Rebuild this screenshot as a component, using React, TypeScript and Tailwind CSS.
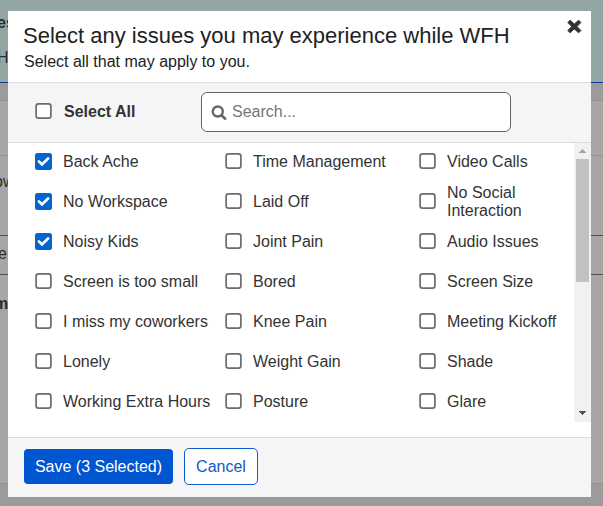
import { useState } from "react";

const columns = [
  ["Back Ache", "No Workspace", "Noisy Kids", "Screen is too small", "I miss my coworkers", "Lonely", "Working Extra Hours"],
  ["Time Management", "Laid Off", "Joint Pain", "Bored", "Knee Pain", "Weight Gain", "Posture"],
  ["Video Calls", "No Social Interaction", "Audio Issues", "Screen Size", "Meeting Kickoff", "Shade", "Glare"],
];
const rows = columns[0].map((_, i) => columns.map((c) => c[i]));

function Box({ checked }: { checked: boolean }) {
  return (
    <svg width="17" height="17" viewBox="0 0 17 17" className="shrink-0">
      {checked ? (
        <>
          <rect width="17" height="17" rx="2.5" fill="#0065cf" />
          <path d="M3.9 8.4 L7 11.4 L13.1 5.5" fill="none" stroke="#fff" strokeWidth="2.7" strokeLinecap="round" />
        </>
      ) : (
        <rect x="1.1" y="0.9" width="14.8" height="14.3" rx="2.4" fill="#fff" stroke="#6b6b6b" strokeWidth="1.7" />
      )}
    </svg>
  );
}

function Option({ label, checked, onToggle }: { label: string; checked: boolean; onToggle: () => void }) {
  return (
    <button type="button" role="checkbox" aria-checked={checked} onClick={onToggle} className="flex h-10 items-center gap-[11px] text-left leading-[18px]">
      <Box checked={checked} />
      <span className="pt-px">{label}</span>
    </button>
  );
}

function Backdrop() {
  return (
    <div className="flex h-full flex-col overflow-hidden bg-[#a6a6a6] text-[#2b2b2b]">
      <div className="h-[83px] shrink-0 border-b border-[#0a3d91] bg-[#93a6a3]">
        <div className="ml-[-3px] pt-[13px] leading-5 font-bold">es</div>
        <div className="ml-[-3px] pt-[15px] leading-5">H</div>
      </div>
      <div className="h-[18px] shrink-0 border-b border-[#929292] bg-[#9b9b9b]" />
      <div className="h-[55px] shrink-0 border-b border-[#929292]" />
      <div className="h-[79px] shrink-0 pt-[16px]">
        <div className="ml-[-6px] leading-5">ow</div>
      </div>
      <div className="h-10 shrink-0 border-y border-[#505050] pt-[8px] leading-5">
        <div className="ml-[-2px]">e</div>
      </div>
      <div className="h-[209px] shrink-0 border-b border-[#929292] pt-[19px]">
        <div className="ml-[-6px] leading-5 font-bold">m</div>
      </div>
      <div className="grow bg-[#9b9b9b]" />
    </div>
  );
}

export default function App() {
  const [selected, setSelected] = useState<string[]>(["Back Ache", "No Workspace", "Noisy Kids"]);
  const all = columns.flat();
  const toggle = (item: string) =>
    setSelected((s) => (s.includes(item) ? s.filter((x) => x !== item) : [...s, item]));

  return (
    <div className="relative h-[506px] w-[603px] overflow-hidden font-['Liberation_Sans',Arial,sans-serif] text-[16px] text-[#333]">
      <Backdrop />
      <div role="dialog" className="absolute top-[11px] left-2 flex h-[486px] w-[583px] flex-col bg-white">
        <header className="flex h-[72px] shrink-0 justify-between border-b border-[#dcdcdc] pl-[15px]">
          <div className="pt-[11px] text-[#222]">
            <h1 className="text-[22px] leading-[27px] whitespace-nowrap">Select any issues you may experience while WFH</h1>
            <p className="pt-[3px] pl-px leading-5">Select all that may apply to you.</p>
          </div>
          <button type="button" aria-label="Close" className="mt-[8px] mr-[9px] h-[15px] w-[15px]">
            <svg width="15" height="15" viewBox="0 0 15 15">
              <path
                d="M3 1.2 L7.3 5.1 L11.6 1.2 L13.9 3.5 L10 7.5 L13.9 11.5 L11.6 13.8 L7.3 9.9 L3 13.8 L0.9 11.5 L4.7 7.5 L0.9 3.5 Z"
                fill="#333"
                stroke="#333"
                strokeWidth="1"
                strokeLinejoin="round"
              />
            </svg>
          </button>
        </header>

        <div className="flex h-[60px] shrink-0 items-start border-b border-[#dcdcdc] bg-[#f5f5f5] pt-[9px] pl-[27px]">
          <div className="-mt-px w-[166px] font-bold [&_button]:gap-3">
            <Option
              label="Select All"
              checked={selected.length === all.length}
              onToggle={() => setSelected(selected.length === all.length ? [] : all)}
            />
          </div>
          <label className="flex h-10 w-[310px] items-center gap-[5px] rounded-[6px] border border-[#666] bg-white pl-[9px]">
            <svg width="16" height="16" viewBox="0 0 16 16" className="mt-[2px]">
              <circle cx="6.8" cy="6.5" r="5" fill="none" stroke="#666" strokeWidth="2.4" />
              <path d="M10.5 10.2 L14.2 13.7" stroke="#666" strokeWidth="2.6" strokeLinecap="round" />
            </svg>
            <input placeholder="Search..." className="w-60 outline-none placeholder:text-[#757575]" />
          </label>
        </div>

        <div className="flex h-[279px] shrink-0 overflow-hidden">
          <div className="grow pl-[27px]">
            <div className="-mt-[2px]">
              {rows.map((row) => (
                <div key={row[0]} className="grid grid-cols-[190px_194px_150px]">
                  {row.map((item) => (
                    <Option key={item} label={item} checked={selected.includes(item)} onToggle={() => toggle(item)} />
                  ))}
                </div>
              ))}
            </div>
          </div>
          <div className="flex w-[17px] shrink-0 flex-col items-center bg-[#f1f1f1]">
            <svg width="17" height="16" viewBox="0 0 17 16" shapeRendering="crispEdges" className="shrink-0">
              <path d="M5 10 h7 v-1 h-1 v-1 h-1 v-1 h-1 v-1 h-1 v1 h-1 v1 h-1 v1 h-1 z" fill="#a3a3a3" />
            </svg>
            <div className="h-[123px] w-[13px] shrink-0 bg-[#c1c1c1]" />
            <div className="grow" />
            <svg width="17" height="17" viewBox="0 0 17 17" shapeRendering="crispEdges" className="shrink-0">
              <path d="M5 6 h7 v1 h-1 v1 h-1 v1 h-1 v1 h-1 v-1 h-1 v-1 h-1 v-1 h-1 z" fill="#505050" />
            </svg>
          </div>
        </div>

        <footer className="mt-[15px] flex grow items-start gap-[11px] border-t border-[#dcdcdc] bg-[#f5f5f5] pt-[10px] pl-4">
          <button type="button" className="mt-px h-[35px] w-[149px] rounded-[4px] bg-[#0055d0] whitespace-nowrap text-white">
            Save ({selected.length} Selected)
          </button>
          <button type="button" className="h-[37px] w-[74px] rounded-[5px] border border-[#0c5bcd] bg-white text-[#1358c0]">
            Cancel
          </button>
        </footer>
      </div>
    </div>
  );
}
